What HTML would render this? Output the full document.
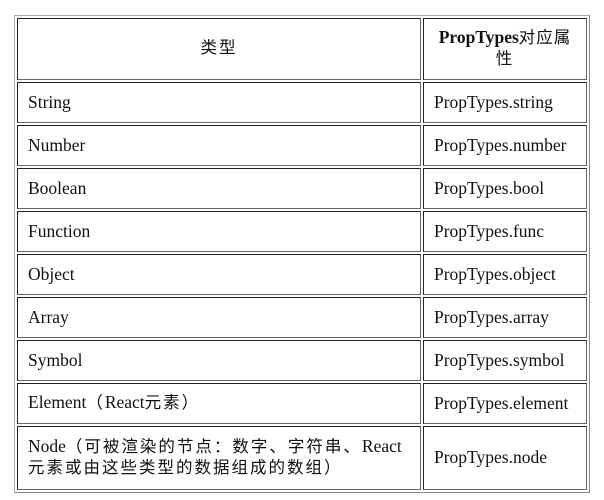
<!DOCTYPE html>
<html><head><meta charset="utf-8"><style>
body{margin:0;background:#fff;}
table{position:absolute;left:14px;top:15px;border-collapse:separate;border-spacing:2px;border:1px solid #aaa;border-right-color:#888;border-bottom-color:#888;width:576px;font-family:"Liberation Serif","Noto Sans CJK SC",serif;font-size:17.5px;color:#111;table-layout:fixed;}
td{border:1px solid #222;border-bottom-color:#666;border-right-color:#666;padding:0 10px 2px;line-height:20px;white-space:nowrap;overflow:hidden;}
td.a{width:382px;}
tr{height:41px;}
tr.h{height:62px;}
.c{text-align:center;}
.k{font-size:16.5px;letter-spacing:2px;}
</style></head><body>
<table>
<tr class="h"><td class="a c k">类型</td><td class="c"><b>PropTypes</b><span class="k" style="letter-spacing:1px">对应属</span><br><span class="k">性</span></td></tr>
<tr><td class="a">String</td><td>PropTypes.string</td></tr>
<tr><td class="a">Number</td><td>PropTypes.number</td></tr>
<tr><td class="a">Boolean</td><td>PropTypes.bool</td></tr>
<tr><td class="a">Function</td><td>PropTypes.func</td></tr>
<tr><td class="a">Object</td><td>PropTypes.object</td></tr>
<tr><td class="a">Array</td><td>PropTypes.array</td></tr>
<tr><td class="a">Symbol</td><td>PropTypes.symbol</td></tr>
<tr><td class="a">Element<span class="k">（</span>React<span class="k">元素）</span></td><td>PropTypes.element</td></tr>
<tr style="height:64px"><td class="a">Node<span class="k">（可被渲染的节点：数字、字符串、</span>React<br><span class="k">元素或由这些类型的数据组成的数组）</span></td><td>PropTypes.node</td></tr>
</table>
</body></html>
